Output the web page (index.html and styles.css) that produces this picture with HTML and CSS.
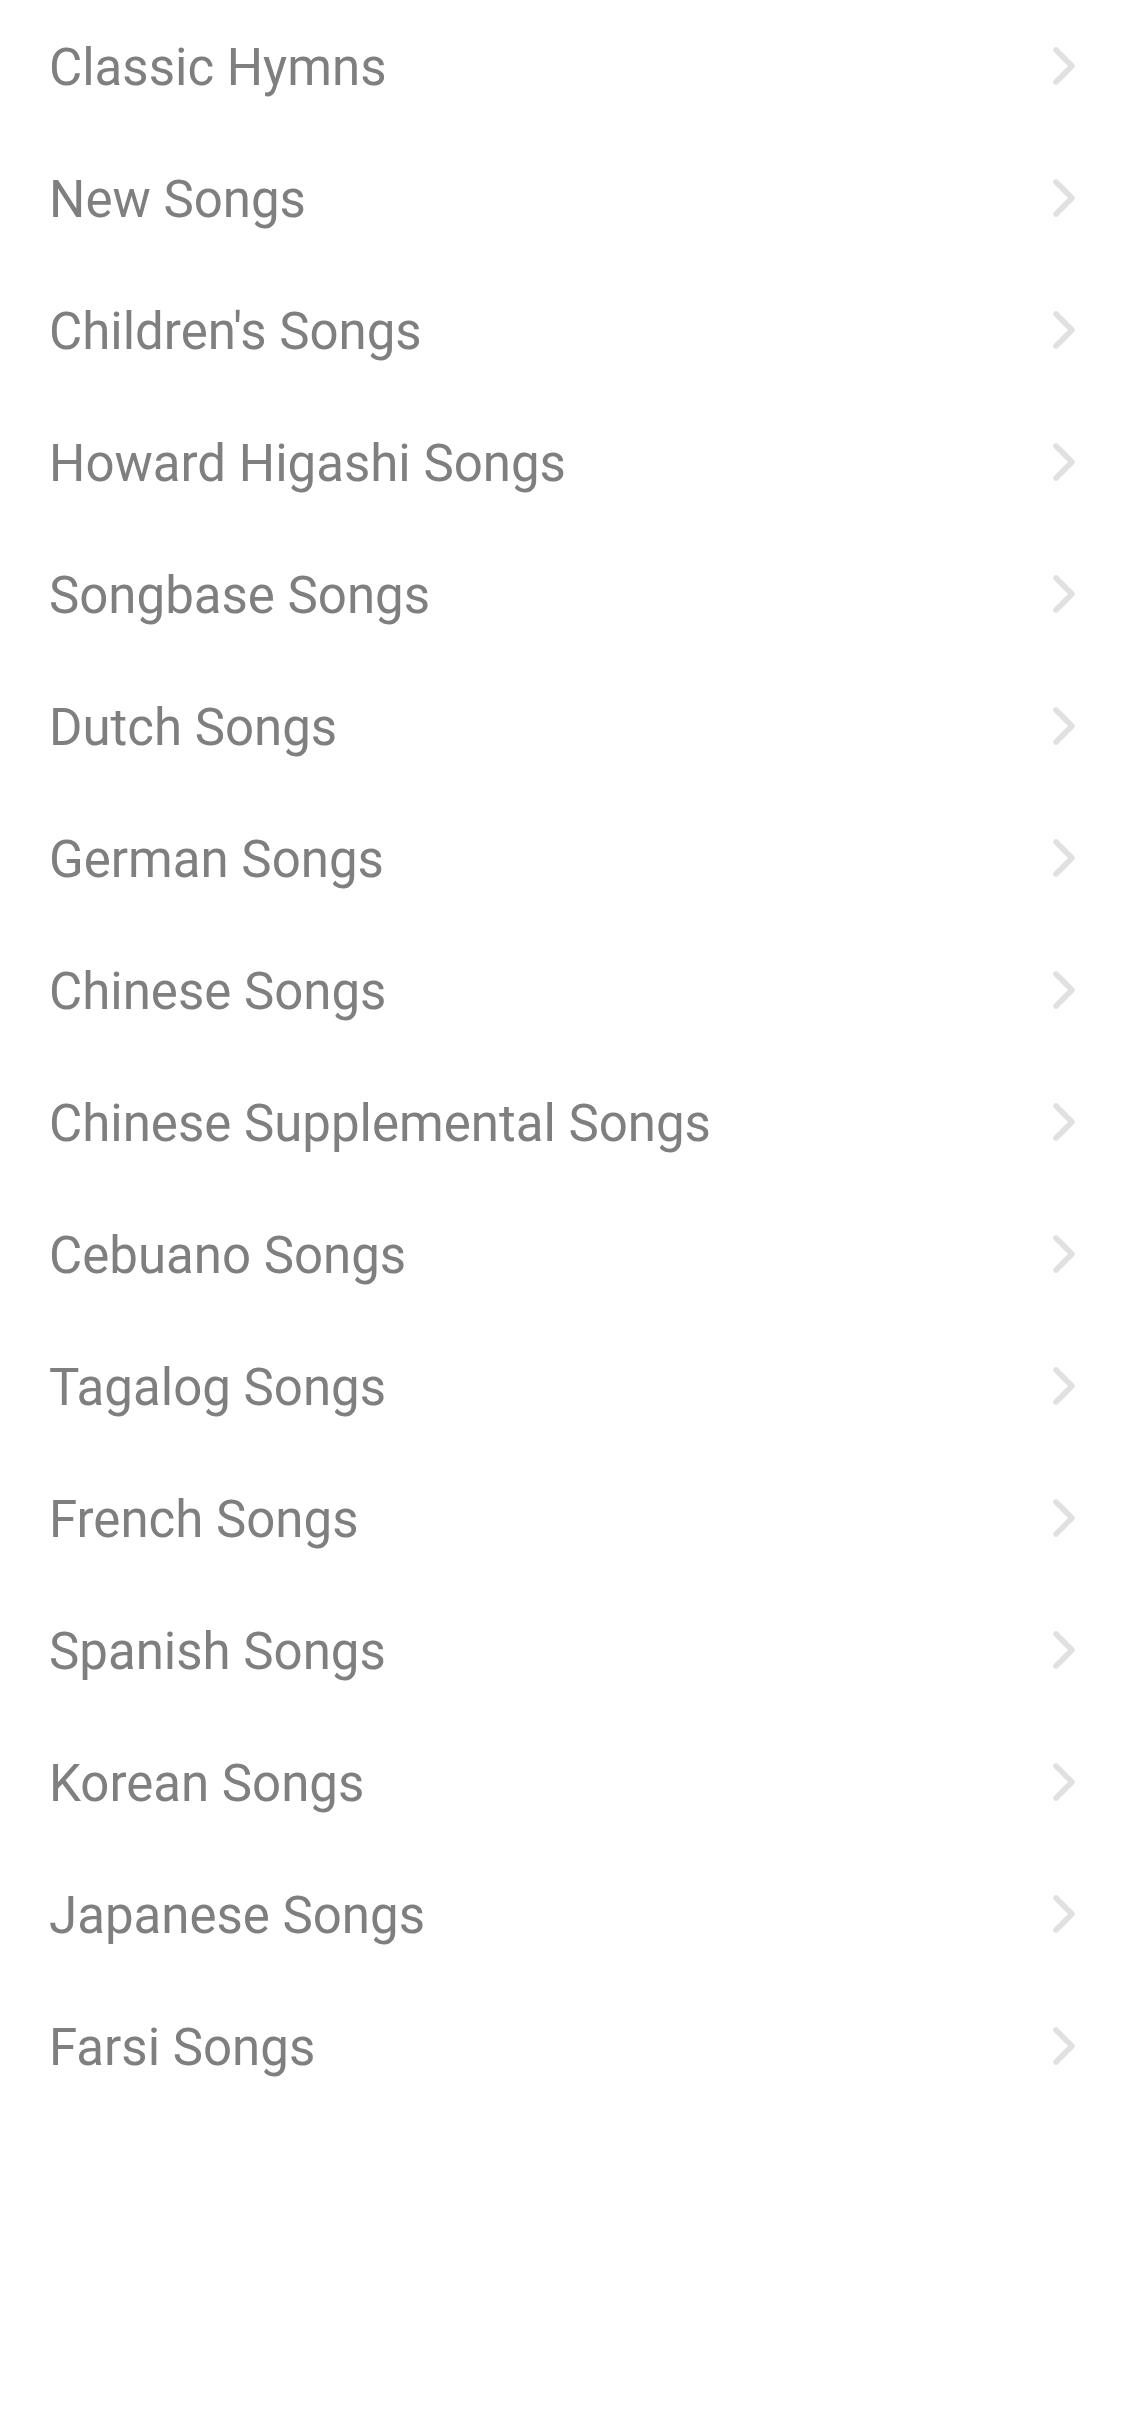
FILE: index.html
```html
<!DOCTYPE html>
<html>
<head>
<meta charset="utf-8">
<link rel="stylesheet" href="styles.css">
</head>
<body>
<ul class="list">
  <li class="row"><span class="label">Classic Hymns</span><svg class="chev" viewBox="0 0 24 38"><path d="M3 3 L19 19 L3 35"/></svg></li>
  <li class="row"><span class="label">New Songs</span><svg class="chev" viewBox="0 0 24 38"><path d="M3 3 L19 19 L3 35"/></svg></li>
  <li class="row"><span class="label">Children's Songs</span><svg class="chev" viewBox="0 0 24 38"><path d="M3 3 L19 19 L3 35"/></svg></li>
  <li class="row"><span class="label">Howard Higashi Songs</span><svg class="chev" viewBox="0 0 24 38"><path d="M3 3 L19 19 L3 35"/></svg></li>
  <li class="row"><span class="label">Songbase Songs</span><svg class="chev" viewBox="0 0 24 38"><path d="M3 3 L19 19 L3 35"/></svg></li>
  <li class="row"><span class="label">Dutch Songs</span><svg class="chev" viewBox="0 0 24 38"><path d="M3 3 L19 19 L3 35"/></svg></li>
  <li class="row"><span class="label">German Songs</span><svg class="chev" viewBox="0 0 24 38"><path d="M3 3 L19 19 L3 35"/></svg></li>
  <li class="row"><span class="label">Chinese Songs</span><svg class="chev" viewBox="0 0 24 38"><path d="M3 3 L19 19 L3 35"/></svg></li>
  <li class="row"><span class="label">Chinese Supplemental Songs</span><svg class="chev" viewBox="0 0 24 38"><path d="M3 3 L19 19 L3 35"/></svg></li>
  <li class="row"><span class="label">Cebuano Songs</span><svg class="chev" viewBox="0 0 24 38"><path d="M3 3 L19 19 L3 35"/></svg></li>
  <li class="row"><span class="label">Tagalog Songs</span><svg class="chev" viewBox="0 0 24 38"><path d="M3 3 L19 19 L3 35"/></svg></li>
  <li class="row"><span class="label">French Songs</span><svg class="chev" viewBox="0 0 24 38"><path d="M3 3 L19 19 L3 35"/></svg></li>
  <li class="row"><span class="label">Spanish Songs</span><svg class="chev" viewBox="0 0 24 38"><path d="M3 3 L19 19 L3 35"/></svg></li>
  <li class="row"><span class="label">Korean Songs</span><svg class="chev" viewBox="0 0 24 38"><path d="M3 3 L19 19 L3 35"/></svg></li>
  <li class="row"><span class="label">Japanese Songs</span><svg class="chev" viewBox="0 0 24 38"><path d="M3 3 L19 19 L3 35"/></svg></li>
  <li class="row"><span class="label">Farsi Songs</span><svg class="chev" viewBox="0 0 24 38"><path d="M3 3 L19 19 L3 35"/></svg></li>
</ul>
</body>
</html>
```
FILE: styles.css
```css
html, body {
  margin: 0;
  padding: 0;
  background: #ffffff;
}
body {
  width: 1125px;
  height: 2436px;
  font-family: Roboto, "Liberation Sans", sans-serif;
}
.list {
  list-style: none;
  margin: 0;
  padding: 0;
}
.row {
  height: 132px;
  display: flex;
  align-items: center;
  justify-content: space-between;
  padding: 0 48px 0 49px;
}
.label {
  font-size: 51px;
  color: #7f7f7f;
  line-height: 1;
  padding-top: 3px;
}
.chev {
  width: 24px;
  height: 38px;
  fill: none;
  stroke: #e0e0e0;
  stroke-width: 5.5;
  stroke-linecap: round;
  stroke-linejoin: round;
}
```
